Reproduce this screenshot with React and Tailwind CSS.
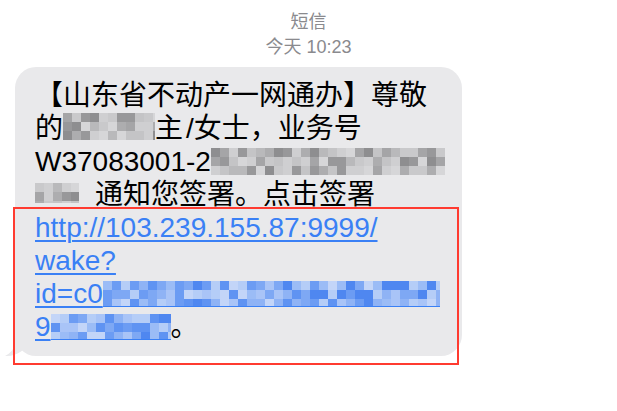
import React from "react";

const GREY = ["#b9b9bb", "#a5a5a7", "#cfcfd1", "#98989a", "#c4c4c6", "#8e8e90", "#d6d6d8", "#adadaf", "#c9c9cb"];
const BLUE = ["#5f93f2", "#7ea8f4", "#a9c4f7", "#8fb3f5", "#6c9cf3", "#c3d5f8", "#4f87f0", "#b5cdf7", "#9bbcf6"];

// pixelated blur block, cells coloured from a fixed pseudo-random sequence
function Mosaic({ w, h, palette, seed = 1, cell = 9, className = "" }) {
  const cols = Math.ceil(w / cell);
  const rows = Math.ceil(h / cell);
  const cells = [];
  let s = seed * 9301 + 49297;
  for (let i = 0; i < cols * rows; i++) {
    s = (s * 9301 + 49297) % 233280;
    cells.push(palette[Math.floor((s / 233280) * palette.length)]);
  }
  return (
    <span className={`inline-block overflow-hidden align-top ${className}`} style={{ width: w, height: h }}>
      <span className="flex flex-wrap" style={{ width: cols * cell }}>
        {cells.map((c, i) => (
          <span key={i} className="block h-[9px] w-[9px]" style={{ background: c }} />
        ))}
      </span>
    </span>
  );
}

function Line({ children }) {
  return <div className="h-[33px] whitespace-nowrap leading-[33px]">{children}</div>;
}

const link = "text-[#3a80f5] underline decoration-[1.5px] underline-offset-[3px]";

export default function App() {
  return (
    <div className="relative h-[411px] w-[617px] overflow-hidden bg-white font-['Liberation_Sans','Noto_Sans_CJK_SC',sans-serif]">
      <div className="pt-[10px] text-center text-[18px] leading-[25px] text-[#8a8a8e]">
        <div>短信</div>
        <div>今天 10:23</div>
      </div>

      <div className="relative ml-[15px] mt-[7px] h-[289px] w-[447px] rounded-[21px] bg-[#e9e9eb] pl-[20px] pt-[12px] text-[28px] text-black">
        <svg className="absolute -left-[10px] bottom-[-1px]" width="30" height="29" viewBox="0 0 30 29">
          <path d="M10 0 L10 14 C10 20 6 25 0 28 C6 28.5 12 26.5 16 23.5 L20 20 L20 0 Z" fill="#e9e9eb" />
        </svg>
        <div className="relative">
          <Line>【山东省不动产一网通办】尊敬</Line>
          <Line>
            的<Mosaic w={92} h={27} palette={GREY} seed={3} className="mt-[1px]" />主<span className="ml-[3px]">/</span>女士，业务号
          </Line>
          <Line>
            W37083001-2<Mosaic w={234} h={27} palette={GREY} seed={7} className="mt-[3px]" />
          </Line>
          <Line>
            <Mosaic w={44} h={20} palette={GREY} seed={11} className="mr-[16px] mt-[5px]" />通知您签署。点击签署
          </Line>
          <Line>
            <span className={link}>http://103.239.155.87:9999/</span>
          </Line>
          <Line>
            <span className={link}>wake?</span>
          </Line>
          <Line>
            <span className={link}>id=c0</span>
            <Mosaic w={337} h={26} palette={BLUE} seed={5} className="mt-[4px] border-b-[1.5px] border-[#3a80f5]" />
          </Line>
          <Line>
            <span className={link}>9</span>
            <Mosaic w={120} h={26} palette={BLUE} seed={13} className="mt-[4px] border-b-[1.5px] border-[#3a80f5]" />。
          </Line>
        </div>
      </div>

      <div className="absolute left-[13px] top-[207px] h-[158px] w-[446px] border-2 border-[#ff3b30]" />
    </div>
  );
}
